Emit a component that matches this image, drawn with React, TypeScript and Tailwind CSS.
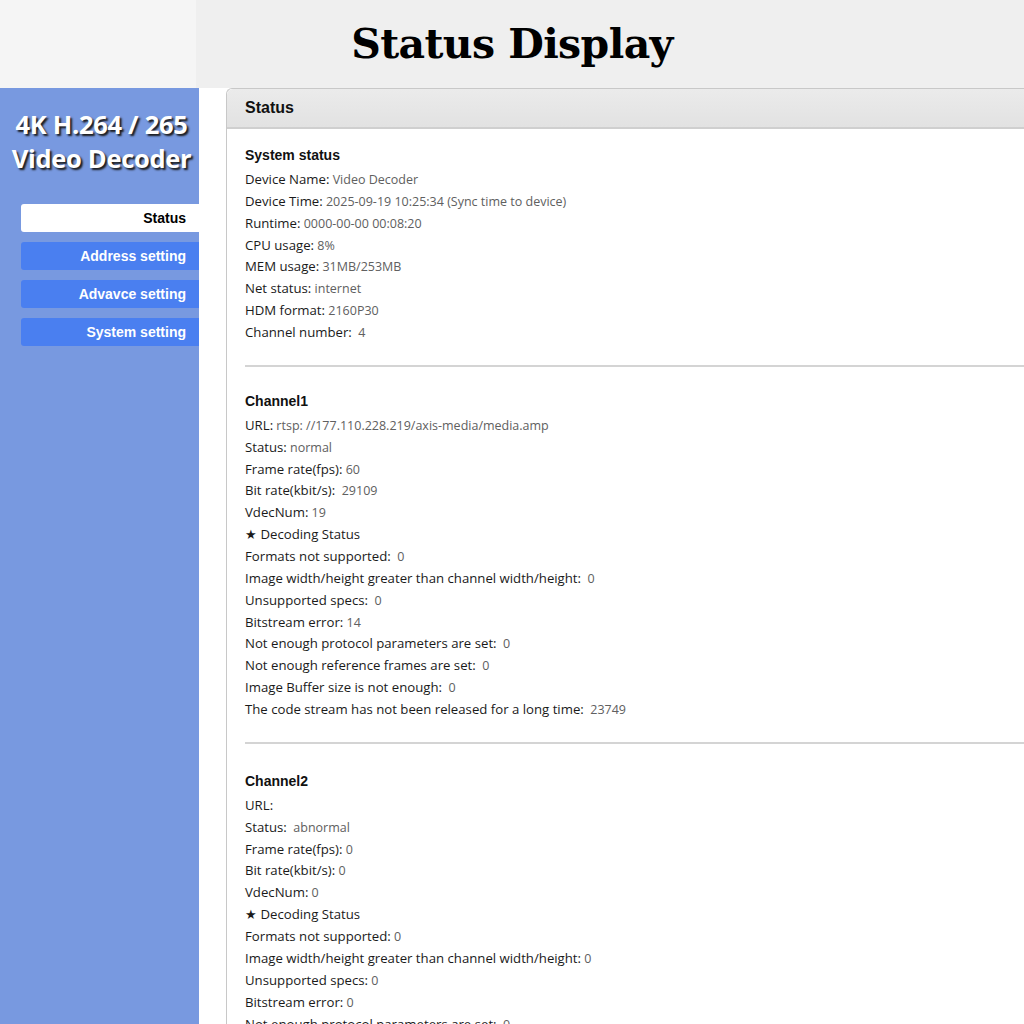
import React from "react";

type Row = { label: string; value?: string; gap?: boolean };

const systemRows: Row[] = [
  { label: "Device Name:", value: "Video Decoder" },
  { label: "Device Time:", value: "2025-09-19 10:25:34 (Sync time to device)" },
  { label: "Runtime:", value: "0000-00-00 00:08:20" },
  { label: "CPU usage:", value: "8%" },
  { label: "MEM usage:", value: "31MB/253MB" },
  { label: "Net status:", value: "internet" },
  { label: "HDM format:", value: "2160P30" },
  { label: "Channel number:", value: "4", gap: true },
];

const channel1: Row[] = [
  { label: "URL:", value: "rtsp: //177.110.228.219/axis-media/media.amp" },
  { label: "Status:", value: "normal" },
  { label: "Frame rate(fps):", value: "60" },
  { label: "Bit rate(kbit/s):", value: "29109", gap: true },
  { label: "VdecNum:", value: "19" },
  { label: "★ Decoding Status" },
  { label: "Formats not supported:", value: "0", gap: true },
  { label: "Image width/height greater than channel width/height:", value: "0", gap: true },
  { label: "Unsupported specs:", value: "0", gap: true },
  { label: "Bitstream error:", value: "14" },
  { label: "Not enough protocol parameters are set:", value: "0", gap: true },
  { label: "Not enough reference frames are set:", value: "0", gap: true },
  { label: "Image Buffer size is not enough:", value: "0", gap: true },
  { label: "The code stream has not been released for a long time:", value: "23749", gap: true },
];

const idleChannel: Row[] = [
  { label: "URL:", value: "" },
  { label: "Status:", value: "abnormal", gap: true },
  { label: "Frame rate(fps):", value: "0" },
  { label: "Bit rate(kbit/s):", value: "0" },
  { label: "VdecNum:", value: "0" },
  { label: "★ Decoding Status" },
  { label: "Formats not supported:", value: "0" },
  { label: "Image width/height greater than channel width/height:", value: "0" },
  { label: "Unsupported specs:", value: "0" },
  { label: "Bitstream error:", value: "0" },
  { label: "Not enough protocol parameters are set:", value: "0", gap: true },
  { label: "Not enough reference frames are set:", value: "0", gap: true },
  { label: "Image Buffer size is not enough:", value: "0", gap: true },
  { label: "The code stream has not been released for a long time:", value: "0", gap: true },
];

const navItems = ["Status", "Address setting", "Advavce setting", "System setting"];

const Section = ({ title, rows, first, last }: { title: string; rows: Row[]; first?: boolean; last?: boolean }) => (
  <div
    className={
      (first ? "pt-[15px] " : last ? "pt-[26px] " : "pt-[23px] ") +
      (last ? "pb-8" : "pb-[22px] border-b-2 border-[#d4d4d4]")
    }
  >
    <h3 className="text-[14px] font-bold text-[#111] font-['Liberation_Sans',Arial,sans-serif] leading-[22px] mb-[2px]">
      {title}
    </h3>
    {rows.map((r, i) => (
      <p key={i} className="h-[21.86px] flex items-baseline text-[13.2px] leading-[22px] text-[#1a1a1a] whitespace-nowrap">
        <span>{r.label}</span>
        {r.value !== undefined && (
          <span className="text-[12.5px] leading-[22px] text-[#606060] whitespace-pre">
            {r.gap ? "  " : " "}
            {r.value}
          </span>
        )}
      </p>
    ))}
  </div>
);

export default function App() {
  return (
    <div className="min-h-screen bg-white font-['Open_Sans','Noto_Sans',sans-serif] overflow-hidden">
      <header className="h-[88px] flex items-center justify-center bg-[linear-gradient(to_right,#f5f5f5_196px,#efefef_196px)]">
        <h1 className="text-[41px] font-bold text-black font-['DejaVu_Serif',Georgia,serif] tracking-[-0.6px] mt-[2px]">
          Status Display
        </h1>
      </header>

      <div className="flex">
        <aside className="w-[199px] shrink-0 bg-[#7899e0] min-h-[1200px] pt-[19px]">
          <div className="text-center pl-[4px] text-white font-bold text-[25.5px] leading-[34px] font-['Open_Sans',sans-serif] tracking-[-0.3px] [text-shadow:2px_2px_2px_#1a1a1a]">
            <div>4K H.264 / 265</div>
            <div>Video Decoder</div>
          </div>
          <nav className="mt-[29px] pl-[21px] flex flex-col gap-[10px]">
            {navItems.map((item, i) => (
              <div
                key={item}
                className={
                  "h-[28px] rounded-l-[3px] flex items-center justify-end pr-[13px] text-[14px] font-bold font-['Liberation_Sans',Arial,sans-serif] " +
                  (i === 0 ? "bg-white text-black" : "bg-[#4a7ff0] text-white")
                }
              >
                {item}
              </div>
            ))}
          </nav>
        </aside>

        <main className="flex-1 pl-[27px] min-w-0">
          <div className="border-l border-t border-[#c8c8c8] rounded-tl-[6px] w-[900px]">
            <div className="h-[40px] bg-[linear-gradient(#ebebeb,#e2e2e2)] border-b-2 border-[#cfcfcf] rounded-tl-[6px] flex items-center pl-[18px]">
              <h2 className="text-[16px] font-bold text-[#111] font-['Liberation_Sans',Arial,sans-serif]">Status</h2>
            </div>
            <div className="pl-[18px]">
              <Section title="System status" rows={systemRows} first />
              <Section title="Channel1" rows={channel1} />
              <Section title="Channel2" rows={idleChannel} last />
            </div>
          </div>
        </main>
      </div>
    </div>
  );
}
